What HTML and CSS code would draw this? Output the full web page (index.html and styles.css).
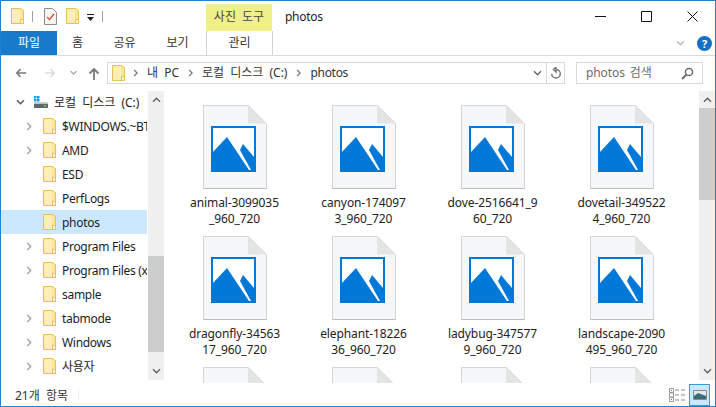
FILE: index.html
```html
<!DOCTYPE html>
<html lang="ko">
<head>
    <meta charset="UTF-8">
    <title>photos</title>
    <link rel="stylesheet" href="styles.css">
</head>
<body>
    <svg class="defs" width="0" height="0">
        <symbol id="folder" viewBox="0 0 13 16">
            <path d="M.5.5h9l3 2v13H.5z" fill="#fde59a" stroke="#e9c04f"/>
            <path d="M1 1h8v14H1z" fill="#fdeeb8"/>
            <path d="M9.5 11.5h3v4h-3z" fill="#fff6d5" stroke="#e9c04f"/>
        </symbol>
        <symbol id="photo" viewBox="0 0 64 84">
            <path d="M.5.5h45l18 18v65H.5z" fill="#f6f7f9" stroke="#d4d5d7"/>
            <path d="M.5 83.5h63" stroke="#bdbdbd"/>
            <path d="M45 .5l18.500 18H45z" fill="#e4e4e4"/>
            <path d="M8 21h45v46H8z" fill="#0078d7"/>
            <path d="M10 23h41v42H10z" fill="#fff"/>
            <path d="M10 47l14-15 22 33H10zM37 45l3-6 11 13v13h-3z" fill="#0078d7"/>
        </symbol>
        <symbol id="chev-r" viewBox="0 0 8 10">
            <path d="M1.500 1l4 4-4 4" fill="none" stroke="currentColor" stroke-width="1.600"/>
        </symbol>
        <symbol id="chev-d" viewBox="0 0 10 8">
            <path d="M1 1.500l4 4 4-4" fill="none" stroke="currentColor" stroke-width="1.600"/>
        </symbol>
        <symbol id="chev-u" viewBox="0 0 10 8">
            <path d="M1 6.500l4-4 4 4" fill="none" stroke="currentColor" stroke-width="1.600"/>
        </symbol>
    </svg>

    <div class="window">
        <!-- title bar -->
        <div class="titlebar">
            <svg class="qa-folder"><use href="#folder"/></svg>
            <span class="qa-sep"></span>
            <svg class="qa-check" viewBox="0 0 13 17">
                <path d="M.5.5h8l4 4v12H.5z" fill="#f7f7f7" stroke="#8c8c8c"/>
                <path d="M3 9l2.500 2.500L10 6" fill="none" stroke="#d9532c" stroke-width="1.400"/>
            </svg>
            <svg class="qa-folder second"><use href="#folder"/></svg>
            <svg class="qa-drop" viewBox="0 0 7 7">
                <path d="M0 0h7v1H0zM0 3h7L3.500 7z" fill="#222"/>
            </svg>
            <span class="qa-sep last"></span>
            <div class="tool-tab">사진 도구</div>
            <div class="title">photos</div>
            <div class="win-buttons">
                <div class="win-btn"><svg width="11" height="11"><path d="M0 5.500h11" stroke="#111"/></svg></div>
                <div class="win-btn"><svg width="11" height="11"><path d="M.5.500h10v10H.5z" fill="none" stroke="#111"/></svg></div>
                <div class="win-btn"><svg width="11" height="11"><path d="M.5.500l10 10M10.500.500l-10 10" stroke="#111"/></svg></div>
            </div>
        </div>

        <!-- ribbon tabs -->
        <div class="tabs">
            <div class="tab file-tab">파일</div>
            <div class="tab home">홈</div>
            <div class="tab share">공유</div>
            <div class="tab view">보기</div>
            <div class="tab manage">관리</div>
            <svg class="ribbon-chev"><use href="#chev-d"/></svg>
            <div class="help">?</div>
        </div>

        <!-- address row -->
        <div class="navbar">
            <svg class="nav-arrow" viewBox="0 0 14 12"><path d="M13 6H2M6.500 1.500L2 6l4.500 4.500" fill="none" stroke="#7a7a7a" stroke-width="1.800"/></svg>
            <svg class="nav-arrow forward" viewBox="0 0 14 12"><path d="M1 6h11M7.500 1.500L12 6l-4.500 4.500" fill="none" stroke="#dcdcdc" stroke-width="1.800"/></svg>
            <svg class="nav-recent"><use href="#chev-d"/></svg>
            <svg class="nav-arrow up" viewBox="0 0 12 13"><path d="M6 13V2M1.500 6.500L6 2l4.500 4.500" fill="none" stroke="#7a7a7a" stroke-width="1.800"/></svg>
            <div class="address">
                <svg class="addr-folder"><use href="#folder"/></svg>
                <svg class="addr-chev first"><use href="#chev-r"/></svg>
                <span class="crumb">내 PC</span>
                <svg class="addr-chev"><use href="#chev-r"/></svg>
                <span class="crumb">로컬 디스크 (C:)</span>
                <svg class="addr-chev"><use href="#chev-r"/></svg>
                <span class="crumb latin">photos</span>
                <svg class="addr-drop"><use href="#chev-d"/></svg>
                <div class="addr-refresh">
                    <svg width="12" height="13" viewBox="0 0 12 13"><path d="M6 2.500a4.300 4.300 0 1 1-4.300 4.300M6 0v5L3.500 2.500z" fill="none" stroke="#7a7a7a" stroke-width="1.500"/></svg>
                </div>
            </div>
            <div class="search">
                <span class="search-text">photos 검색</span>
                <svg width="13" height="13" viewBox="0 0 13 13"><circle cx="8" cy="5" r="3.600" fill="none" stroke="#6d6d6d" stroke-width="1.500"/><path d="M5.500 7.500L1 12" stroke="#6d6d6d" stroke-width="2"/></svg>
            </div>
        </div>

        <div class="content">
            <!-- folder tree -->
            <div class="tree">
                <div class="tree-row root">
                    <svg class="tree-chev open"><use href="#chev-d"/></svg>
                    <svg class="drive" viewBox="0 0 16 14">
                        <path d="M1 1h2.500v2.500H1zM4 1h2.500v2.500H4zM1 4h2.500v2.500H1zM4 4h2.500v2.500H4z" fill="#14a0e8"/>
                        <path d="M1 8.500h14V13H1z" fill="#5f6a70"/>
                        <path d="M2 7h12l1 1.500H1z" fill="#c9ced1"/>
                        <path d="M11 10h2v1.500h-2z" fill="#7fd04c"/>
                    </svg>
                    <span class="root-name">로컬 디스크 (C:)</span>
                </div>
                <div class="tree-row"><svg class="tree-chev"><use href="#chev-r"/></svg><svg class="tree-folder"><use href="#folder"/></svg><span>$WINDOWS.~BT</span></div>
                <div class="tree-row"><svg class="tree-chev"><use href="#chev-r"/></svg><svg class="tree-folder"><use href="#folder"/></svg><span>AMD</span></div>
                <div class="tree-row"><span class="tree-chev"></span><svg class="tree-folder"><use href="#folder"/></svg><span>ESD</span></div>
                <div class="tree-row"><span class="tree-chev"></span><svg class="tree-folder"><use href="#folder"/></svg><span>PerfLogs</span></div>
                <div class="tree-row selected"><span class="tree-chev"></span><svg class="tree-folder"><use href="#folder"/></svg><span>photos</span></div>
                <div class="tree-row"><svg class="tree-chev"><use href="#chev-r"/></svg><svg class="tree-folder"><use href="#folder"/></svg><span>Program Files</span></div>
                <div class="tree-row"><svg class="tree-chev"><use href="#chev-r"/></svg><svg class="tree-folder"><use href="#folder"/></svg><span>Program Files (x86)</span></div>
                <div class="tree-row"><span class="tree-chev"></span><svg class="tree-folder"><use href="#folder"/></svg><span>sample</span></div>
                <div class="tree-row"><svg class="tree-chev"><use href="#chev-r"/></svg><svg class="tree-folder"><use href="#folder"/></svg><span>tabmode</span></div>
                <div class="tree-row"><svg class="tree-chev"><use href="#chev-r"/></svg><svg class="tree-folder"><use href="#folder"/></svg><span>Windows</span></div>
                <div class="tree-row"><svg class="tree-chev"><use href="#chev-r"/></svg><svg class="tree-folder"><use href="#folder"/></svg><span>사용자</span></div>
            </div>
            <div class="scrollbar tree-scroll">
                <svg class="sb-arrow"><use href="#chev-u"/></svg>
                <div class="sb-track"><div class="sb-thumb"></div></div>
                <svg class="sb-arrow"><use href="#chev-d"/></svg>
            </div>

            <!-- files -->
            <div class="files">
                <div class="file"><svg class="file-icon"><use href="#photo"/></svg><div class="file-name">animal-3099035<br>_960_720</div></div>
                <div class="file"><svg class="file-icon"><use href="#photo"/></svg><div class="file-name">canyon-174097<br>3_960_720</div></div>
                <div class="file"><svg class="file-icon"><use href="#photo"/></svg><div class="file-name">dove-2516641_9<br>60_720</div></div>
                <div class="file"><svg class="file-icon"><use href="#photo"/></svg><div class="file-name">dovetail-349522<br>4_960_720</div></div>
                <div class="file"><svg class="file-icon"><use href="#photo"/></svg><div class="file-name">dragonfly-34563<br>17_960_720</div></div>
                <div class="file"><svg class="file-icon"><use href="#photo"/></svg><div class="file-name">elephant-18226<br>36_960_720</div></div>
                <div class="file"><svg class="file-icon"><use href="#photo"/></svg><div class="file-name">ladybug-347577<br>9_960_720</div></div>
                <div class="file"><svg class="file-icon"><use href="#photo"/></svg><div class="file-name">landscape-2090<br>495_960_720</div></div>
                <div class="file"><svg class="file-icon"><use href="#photo"/></svg></div>
                <div class="file"><svg class="file-icon"><use href="#photo"/></svg></div>
                <div class="file"><svg class="file-icon"><use href="#photo"/></svg></div>
                <div class="file"><svg class="file-icon"><use href="#photo"/></svg></div>
            </div>
            <div class="scrollbar files-scroll">
                <svg class="sb-arrow"><use href="#chev-u"/></svg>
                <div class="sb-track"><div class="sb-thumb"></div></div>
                <svg class="sb-arrow"><use href="#chev-d"/></svg>
            </div>
        </div>

        <!-- status bar -->
        <div class="statusbar">
            <span class="count">21개 항목</span>
            <span class="status-sep"></span>
            <svg class="view-details" viewBox="0 0 17 14">
                <path d="M.5.500h4v4h-4zM.5 5h4v4h-4zM.5 9.500h4v4h-4z" fill="#fff" stroke="#9a9a9a"/>
                <path d="M6 2h4M12 2h4M6 7h4M12 7h4M6 12h4M12 12h4" stroke="#8a8a8a"/>
                <path d="M2 2h1v1H2zM2 11h1v1H2z" fill="#d0443a"/>
            </svg>
            <div class="view-large">
                <svg width="14" height="10" viewBox="0 0 14 10">
                    <path d="M.5.500h13v9H.5z" fill="#dfe9ee" stroke="#8b8b8b"/>
                    <path d="M1 6l4-3 8 3v3H1z" fill="#3d6a78"/>
                </svg>
            </div>
        </div>
    </div>
</body>
</html>
```

FILE: styles.css
```css
* {
    box-sizing: border-box;
}
html, body {
    margin: 0;
    padding: 0;
    overflow: hidden;
}
body {
    width: 716px;
    height: 407px;
    background: #fff;
    font-family: "Noto Sans", "Noto Sans CJK KR", sans-serif;
    font-size: 12px;
    color: #1c1c1c;
}
.defs {
    display: block;
    height: 0;
}
.window {
    width: 716px;
    height: 407px;
    border: 1px solid #1883d7;
    display: flex;
    flex-direction: column;
    background: #fff;
}

/* title bar */
.titlebar {
    height: 30px;
    display: flex;
    align-items: center;
    flex: none;
}
.qa-folder {
    width: 13px;
    height: 16px;
    margin-left: 10px;
    margin-top: -1px;
}
.qa-folder.second {
    margin-left: 9px;
}
.qa-sep {
    width: 1px;
    height: 11px;
    background: #a0a0a0;
    margin-left: 8px;
}
.qa-sep.last {
    margin-left: 8px;
}
.qa-check {
    width: 13px;
    height: 17px;
    margin-left: 11px;
    margin-top: 1px;
}
.qa-drop {
    width: 7px;
    height: 7px;
    margin-left: 8px;
    margin-top: 2px;
}
.tool-tab {
    width: 66px;
    height: 27px;
    margin-top: 3px;
    margin-left: 103px;
    background: #f0f08a;
    color: #444;
    text-align: center;
    line-height: 25px;
    word-spacing: 3px;
}
.title {
    margin-left: 13px;
    letter-spacing: -.3px;
}
.win-buttons {
    margin-left: auto;
    display: flex;
}
.win-btn {
    width: 46px;
    height: 30px;
    display: flex;
    align-items: center;
    justify-content: center;
}
.win-btn svg {
    display: block;
}

/* ribbon tabs */
.tabs {
    height: 25px;
    flex: none;
    display: flex;
    border-bottom: 1px solid #dadada;
    align-items: flex-start;
}
.tab {
    height: 24px;
    line-height: 23px;
    text-align: center;
    color: #333;
}
.file-tab {
    width: 56px;
    background: #1979ca;
    color: #fff;
}
.home {
    width: 41px;
}
.share {
    width: 53px;
}
.view {
    width: 53px;
}
.manage {
    width: 67px;
    margin-left: 2px;
    border-left: 1px solid #d4d4d4;
    border-right: 1px solid #d4d4d4;
}
.ribbon-chev {
    width: 9px;
    height: 7px;
    margin-left: auto;
    margin-top: 9px;
    color: #b9b9b9;
}
.help {
    width: 15px;
    height: 15px;
    margin: 5px 3px 0 12px;
    border-radius: 50%;
    background: #1270c4;
    color: #fff;
    font-weight: 700;
    font-size: 11px;
    line-height: 15px;
    text-align: center;
}

/* address row */
.navbar {
    height: 32px;
    flex: none;
    display: flex;
    align-items: center;
    padding-top: 2px;
}
.nav-arrow {
    width: 12px;
    height: 12px;
    margin-left: 14px;
}
.nav-arrow.forward {
    margin-left: 17px;
}
.nav-recent {
    width: 7px;
    height: 6px;
    margin-left: 14px;
    color: #9a9a9a;
}
.nav-arrow.up {
    width: 12px;
    height: 13px;
    margin-left: 11px;
}
.address {
    width: 458px;
    height: 22px;
    margin-left: 7px;
    border: 1px solid #d9d9d9;
    display: flex;
    align-items: center;
}
.addr-folder {
    width: 13px;
    height: 16px;
    margin-left: 4px;
}
.addr-chev {
    width: 6px;
    height: 8px;
    margin-left: 9px;
    color: #777;
}
.addr-chev.first {
    margin-left: 8px;
}
.crumb {
    margin-left: 8px;
    margin-bottom: 2px;
    color: #333;
    word-spacing: 3px;
}
.crumb.latin {
    letter-spacing: -.3px;
}
.addr-drop {
    width: 9px;
    height: 7px;
    margin-left: auto;
    color: #666;
}
.addr-refresh {
    width: 18px;
    height: 20px;
    margin-left: 4px;
    border-left: 1px solid #d9d9d9;
    display: flex;
    align-items: center;
    justify-content: center;
}
.search {
    width: 127px;
    height: 22px;
    margin-left: 11px;
    padding: 0 8px 0 9px;
    border: 1px solid #d9d9d9;
    display: flex;
    align-items: center;
    justify-content: space-between;
    color: #6d6d6d;
    word-spacing: 2px;
    letter-spacing: -.1px;
}
.search-text {
    margin-bottom: 2px;
}

/* main area */
.content {
    flex: 1;
    min-height: 0;
    display: flex;
}
.tree {
    width: 147px;
    flex: none;
    padding-top: 2px;
    overflow: hidden;
}
.tree-row {
    width: 146px;
    height: 24px;
    display: flex;
    align-items: center;
    white-space: nowrap;
    overflow: hidden;
    letter-spacing: -.3px;
}
.tree-row.selected {
    background: #cce8ff;
}
.tree-chev {
    width: 7px;
    height: 9px;
    flex: none;
    margin-left: 25px;
    color: #a6a6a6;
}
.tree-chev.open {
    width: 9px;
    height: 7px;
    margin-left: 15px;
    color: #555;
}
.tree-folder {
    width: 13px;
    height: 16px;
    flex: none;
    margin-left: 10px;
    margin-right: 6px;
}
.drive {
    width: 16px;
    height: 14px;
    flex: none;
    margin-left: 8px;
}
.root-name {
    margin-left: 5px;
    letter-spacing: 0;
    word-spacing: 3px;
}
.scrollbar {
    width: 16px;
    flex: none;
    margin-top: 3px;
    margin-bottom: 3px;
    background: #f0f0f0;
    display: flex;
    flex-direction: column;
    align-items: center;
}
.sb-arrow {
    width: 9px;
    height: 7px;
    flex: none;
    margin: 5px 0;
    color: #606060;
}
.sb-track {
    flex: 1;
    width: 100%;
}
.sb-thumb {
    background: #cdcdcd;
}
.tree-scroll .sb-thumb {
    height: 96px;
    margin-top: 148px;
}
.files-scroll .sb-thumb {
    height: 92px;
}
.files {
    flex: 1;
    min-width: 0;
    overflow: hidden;
    padding: 17px 13px 0 6px;
    display: grid;
    grid-template-columns: repeat(4, 1fr);
    grid-auto-rows: 131px;
}
.file {
    display: flex;
    flex-direction: column;
    align-items: center;
}
.file-icon {
    width: 64px;
    height: 84px;
    flex: none;
}
.file-name {
    margin-top: 6px;
    line-height: 16px;
    text-align: center;
    color: #222;
    white-space: nowrap;
    letter-spacing: -.1px;
}

/* status bar */
.statusbar {
    height: 23px;
    flex: none;
    display: flex;
    align-items: center;
}
.count {
    margin-left: 14px;
    color: #333;
    word-spacing: 3px;
}
.status-sep {
    width: 1px;
    height: 11px;
    margin-left: 10px;
    background: #ececec;
}
.view-details {
    width: 17px;
    height: 14px;
    margin-left: auto;
}
.view-large {
    width: 21px;
    height: 22px;
    margin: 0 5px 0 3px;
    border: 1px solid #3a9bdc;
    background: #cce8ff;
    display: flex;
    align-items: center;
    justify-content: center;
}
```
